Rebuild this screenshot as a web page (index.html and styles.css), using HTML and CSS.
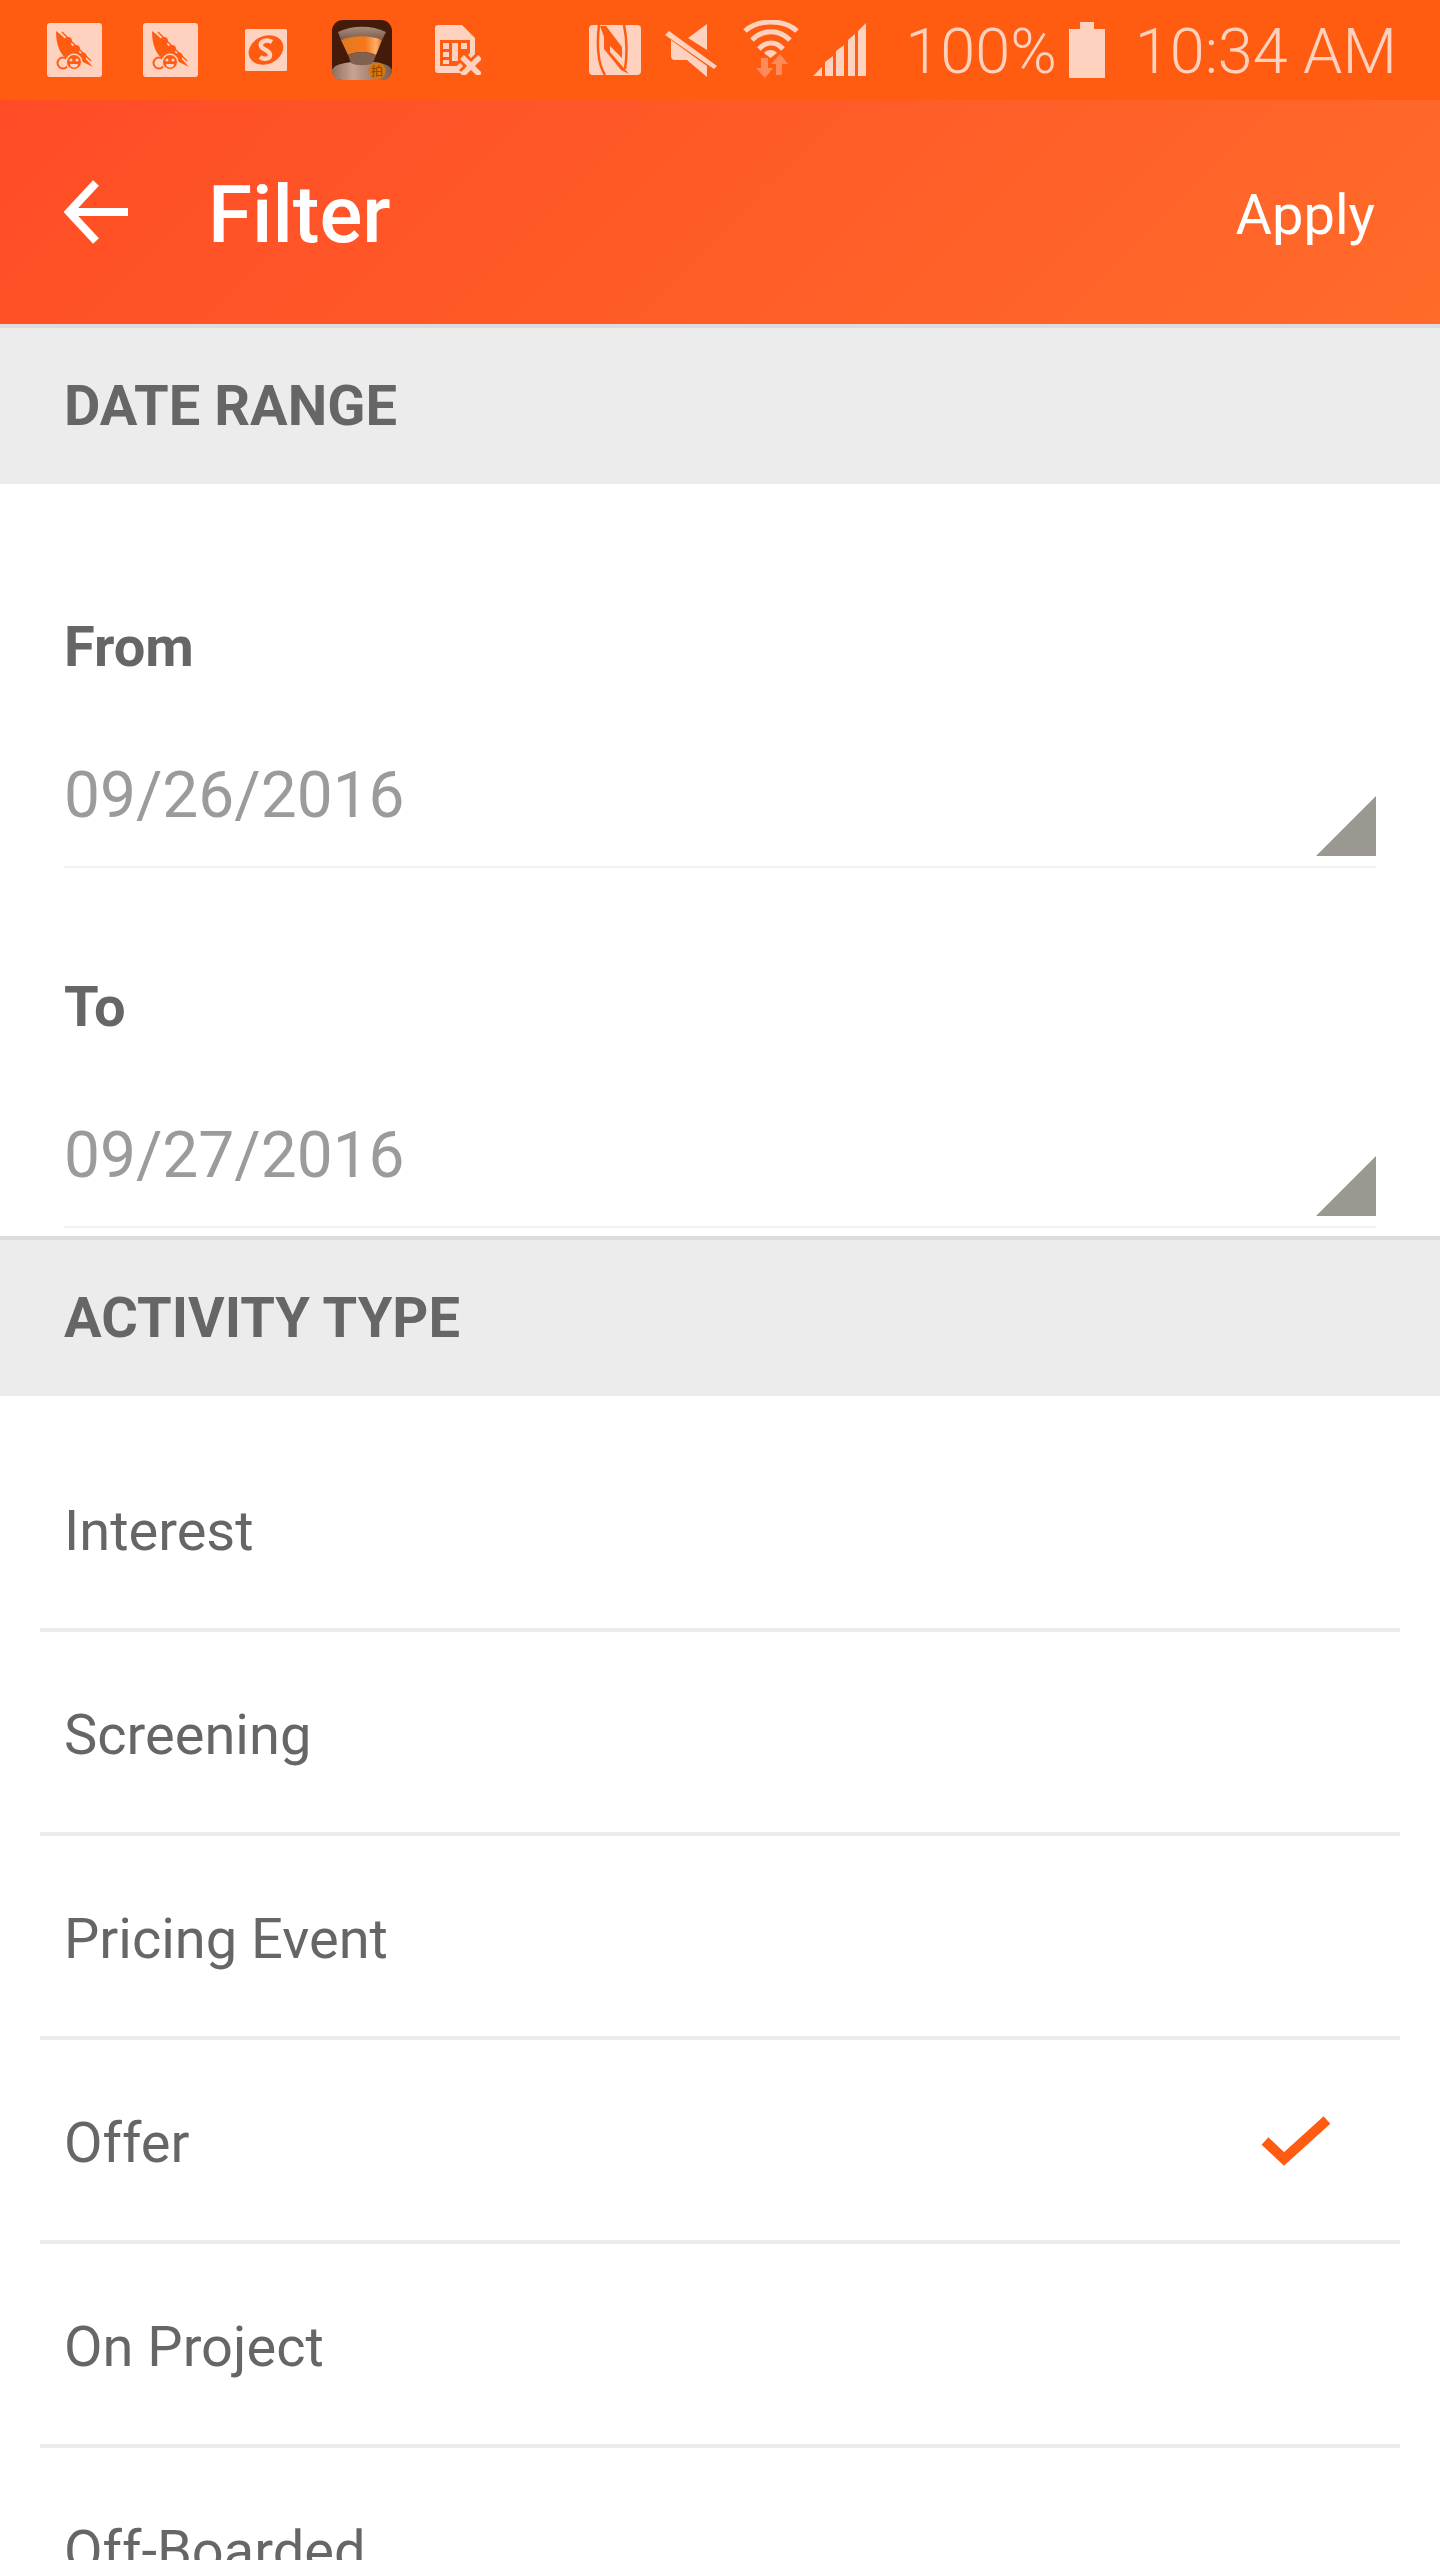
FILE: index.html
```html
<!DOCTYPE html>
<html lang="en">
<head>
    <meta charset="UTF-8">
    <meta name="viewport" content="width=device-width, initial-scale=1.0">
    <title>Filter</title>
    <link rel="stylesheet" href="styles.css">
</head>
<body>
    <div class="status-bar">
        <div class="status-left">
            <svg class="ic-pod" viewBox="0 0 55 54">
                <rect width="55" height="54" rx="3" fill="#ffd2bf"/>
                <path d="M9 8 C9 22 13 32 22 38 L34 38 L46 44 L37 34 L13 11Z" fill="#ff5c11"/>
                <circle cx="21" cy="18" r="4" fill="#ff5c11"/>
                <circle cx="29" cy="26" r="4" fill="#ff5c11"/>
                <circle cx="36" cy="33" r="3.5" fill="#ff5c11"/>
                <path d="M15 9 L44 38" stroke="#ff5c11" stroke-width="1.5"/>
                <circle cx="16" cy="40" r="6.5" fill="#ffd2bf"/>
                <circle cx="16" cy="40" r="5.5" fill="none" stroke="#ff5c11" stroke-width="2"/>
                <circle cx="27" cy="39" r="8.5" fill="#ffd2bf"/>
                <circle cx="27" cy="39" r="7" fill="#ff5c11"/>
                <circle cx="24" cy="37" r="1.6" fill="#ffd2bf"/>
                <circle cx="30" cy="37" r="1.6" fill="#ffd2bf"/>
                <path d="M23 41 h8 a4 3.5 0 0 1 -8 0Z" fill="#ffd2bf"/>
            </svg>
            <svg class="ic-pod" viewBox="0 0 55 54">
                <rect width="55" height="54" rx="3" fill="#ffd2bf"/>
                <path d="M9 8 C9 22 13 32 22 38 L34 38 L46 44 L37 34 L13 11Z" fill="#ff5c11"/>
                <circle cx="21" cy="18" r="4" fill="#ff5c11"/>
                <circle cx="29" cy="26" r="4" fill="#ff5c11"/>
                <circle cx="36" cy="33" r="3.5" fill="#ff5c11"/>
                <path d="M15 9 L44 38" stroke="#ff5c11" stroke-width="1.5"/>
                <circle cx="16" cy="40" r="6.5" fill="#ffd2bf"/>
                <circle cx="16" cy="40" r="5.5" fill="none" stroke="#ff5c11" stroke-width="2"/>
                <circle cx="27" cy="39" r="8.5" fill="#ffd2bf"/>
                <circle cx="27" cy="39" r="7" fill="#ff5c11"/>
                <circle cx="24" cy="37" r="1.6" fill="#ffd2bf"/>
                <circle cx="30" cy="37" r="1.6" fill="#ffd2bf"/>
                <path d="M23 41 h8 a4 3.5 0 0 1 -8 0Z" fill="#ffd2bf"/>
            </svg>
            <svg class="ic-s" viewBox="0 0 42 42">
                <rect width="42" height="42" rx="1.5" fill="#ffd2bf"/>
                <ellipse cx="21" cy="21" rx="18" ry="14" transform="rotate(-25 21 21)" fill="#ff5c11"/>
                <path d="M27 13 C22 10 15 12 16 17 C17 21 25 21 25 26 C25 30 19 31 15 28" fill="none" stroke="#ffd2bf" stroke-width="4.5"/>
            </svg>
            <svg class="ic-robot" viewBox="0 0 60 60">
                <defs>
                    <linearGradient id="capGrad" x1="0" y1="0" x2="0" y2="1">
                        <stop offset="0" stop-color="#a98c7c"/>
                        <stop offset="1" stop-color="#7a5c4c"/>
                    </linearGradient>
                    <linearGradient id="bandGrad" x1="0" y1="0" x2="1" y2="0">
                        <stop offset="0" stop-color="#e07a20"/>
                        <stop offset="0.6" stop-color="#f5781a"/>
                        <stop offset="0.85" stop-color="#ffb06a"/>
                        <stop offset="1" stop-color="#e0771e"/>
                    </linearGradient>
                    <linearGradient id="bodyGrad" x1="0" y1="0" x2="1" y2="0">
                        <stop offset="0" stop-color="#8f7062"/>
                        <stop offset="0.35" stop-color="#c9a292"/>
                        <stop offset="1" stop-color="#7c5f50"/>
                    </linearGradient>
                </defs>
                <rect width="60" height="60" rx="11" fill="#431b08"/>
                <path d="M0 50 C2 45 10 43 20 42 H42 C50 43 58 45 60 50 C60 56 56 60 50 60 H10 C4 60 0 56 0 50Z" fill="url(#bodyGrad)"/>
                <path d="M6 12 C20 5 40 5 54 12 L50 20 C38 16 22 16 9 20Z" fill="url(#capGrad)"/>
                <path d="M9 20 C22 15 38 15 50 20 L44 35 C36 31 24 31 16 35Z" fill="url(#bandGrad)"/>
                <path d="M16 35 C24 31 36 31 44 35 L41 43 C36 46 24 46 19 43Z" fill="#80604f"/>
                <circle cx="45" cy="51" r="8.5" fill="#d9760f"/>
                <text class="robot-mark" x="45" y="55.5" text-anchor="middle">拍</text>
            </svg>
            <svg class="ic-sim" viewBox="0 0 46 50">
                <path d="M3 0 H27 L40 13 V40 Q40 48 37 48 H3 Q0 48 0 45 V3 Q0 0 3 0Z" fill="#ffd2bf"/>
                <path d="M5 15 H35 V28 L22 41 H5Z" fill="#ff5c11"/>
                <path d="M8 18 h6 v6 h-6z M8 27 h6 v5 h-6z M8 35 h6 v4 h-6z M17 18 h6 v18 h-6z M26 18 h6 v6 h-6z" fill="#ffd2bf"/>
                <path d="M28 33 L44 49 M44 33 L28 49" stroke="#ff5c11" stroke-width="11" fill="none"/>
                <path d="M27 32 L45 50 M45 32 L27 50" stroke="#ffd2bf" stroke-width="5.5" fill="none"/>
            </svg>
        </div>
        <div class="status-right">
            <svg class="ic-nfc" viewBox="0 0 52 50">
                <rect width="52" height="50" rx="4" fill="#ffd2bf"/>
                <path d="M10 0 C8 16 8 38 16 50" fill="none" stroke="#ff5c11" stroke-width="2.5"/>
                <path d="M35 0 C38 14 38 31 36 44" fill="none" stroke="#ff5c11" stroke-width="2.5"/>
                <path d="M11 1 H17 L33 22 V33 L21 21 V27 L40 49 L32 45 L15 24 V12 Z" fill="#ff5c11"/>
            </svg>
            <svg class="ic-mute" viewBox="0 0 52 54">
                <path d="M23 15 L42 1 V27Z" fill="#ffd2bf"/>
                <path d="M0 12 L4 8 L52 43 L49 46Z" fill="#ffd2bf"/>
                <path d="M6 17 V33 Q6 37 10 37 H22 L42 54 V43Z" fill="#ffd2bf"/>
            </svg>
            <svg class="ic-wifi" viewBox="0 0 56 60">
                <g fill="none" stroke="#ffd2bf" stroke-width="5">
                    <path d="M2 11 C15 -1 41 -1 54 11"/>
                    <path d="M9 20 C20 9 36 9 47 20"/>
                    <path d="M16 29 C23 21 33 21 40 29"/>
                </g>
                <path d="M21 33 C24 29 31 29 34 33 L27.5 38Z" fill="#ffd2bf"/>
                <path d="M18 38 h7 v10 h5 l-8 10 l-9 -10 h5z M33 55 V44 h-5 l9 -10 l8 10 h-6 v11z" fill="#ff8a5a"/>
            </svg>
            <svg class="ic-signal" viewBox="0 0 54 54">
                <path d="M0 53 L9 44 V53Z M12 39 L20 33 V53 H12Z M23 28 L31 22 V53 H23Z M35 17 L42 11 V53 H35Z M45 8 L53 0 V53 H45Z" fill="#ffd2bf"/>
            </svg>
            <span class="status-pct">100%</span>
            <div class="battery">
                <div class="battery-nub"></div>
                <div class="battery-body"></div>
            </div>
            <span class="status-time">10:34 AM</span>
        </div>
    </div>

    <header class="appbar">
        <svg class="back-arrow" viewBox="0 0 64 64">
            <path d="M32 3 L5 32 L32 61 M5 32 H64" fill="none" stroke="#fff" stroke-width="8"/>
        </svg>
        <h1 class="appbar-title">Filter</h1>
        <span class="appbar-action">Apply</span>
    </header>

    <div class="section-head date-head">DATE RANGE</div>
    <section class="date-section">
        <div class="field">
            <div class="field-label">From</div>
            <div class="date-row">
                <span class="date-value">09/26/2016</span>
                <svg class="corner" viewBox="0 0 60 60"><path d="M60 0 V60 H0Z" fill="#9b9892"/></svg>
            </div>
        </div>
        <div class="field">
            <div class="field-label">To</div>
            <div class="date-row">
                <span class="date-value">09/27/2016</span>
                <svg class="corner" viewBox="0 0 60 60"><path d="M60 0 V60 H0Z" fill="#9b9892"/></svg>
            </div>
        </div>
    </section>

    <div class="section-head">ACTIVITY TYPE</div>
    <ul class="type-list">
        <li class="type-row">Interest</li>
        <li class="type-row">Screening</li>
        <li class="type-row">Pricing Event</li>
        <li class="type-row">Offer
            <svg class="check" viewBox="0 0 70 52">
                <path d="M4 26 L23 44 L66 5" fill="none" stroke="#ff5c11" stroke-width="10"/>
            </svg>
        </li>
        <li class="type-row">On Project</li>
        <li class="type-row">Off-Boarded</li>
    </ul>
</body>
</html>
```

FILE: styles.css
```css
* {
    box-sizing: border-box;
}
html, body {
    margin: 0;
    padding: 0;
}
body {
    width: 1440px;
    height: 2560px;
    overflow: hidden;
    background: #fff;
    font-family: "Roboto", sans-serif;
    color: #666;
}

/* status bar */
.status-bar {
    height: 100px;
    background: #ff5c11;
    display: flex;
    justify-content: space-between;
    align-items: center;
    color: #ffd2bf;
}
.status-left, .status-right {
    display: flex;
    align-items: center;
}
.status-left {
    padding-left: 47px;
}
.status-right {
    padding-right: 43px;
}
.status-left svg, .status-right svg {
    display: block;
    flex: none;
}
.ic-pod {
    width: 55px;
    height: 54px;
    margin-right: 41px;
}
.ic-pod + .ic-pod {
    margin-right: 47px;
}
.ic-s {
    width: 42px;
    height: 42px;
    margin-right: 45px;
}
.ic-robot {
    width: 60px;
    height: 60px;
    margin-right: 43px;
}
.robot-mark {
    font-family: "Noto Sans CJK SC", sans-serif;
    font-size: 12px;
    fill: #8a4000;
}
.ic-sim {
    width: 46px;
    height: 50px;
}
.ic-nfc {
    width: 52px;
    height: 50px;
    margin-right: 24px;
}
.ic-mute {
    width: 52px;
    height: 54px;
    margin-right: 26px;
}
.ic-wifi {
    width: 56px;
    height: 60px;
    margin-right: 14px;
}
.ic-signal {
    width: 54px;
    height: 54px;
    margin-right: 38px;
}
.status-pct, .status-time {
    font-size: 63px;
    font-weight: 300;
    line-height: 100px;
    padding-top: 4px;
    white-space: nowrap;
}
.battery {
    width: 36px;
    margin: 0 30px 0 12px;
    display: flex;
    flex-direction: column;
    align-items: center;
}
.battery-nub {
    width: 14px;
    height: 7px;
    background: #ffd2bf;
}
.battery-body {
    width: 36px;
    height: 49px;
    background: #ffd2bf;
}

/* app bar */
.appbar {
    height: 224px;
    background: linear-gradient(135deg, #ff4c26 0%, #ff6b2a 100%);
    display: flex;
    align-items: center;
    padding: 0 65px 0 64px;
    color: #fff;
}
.back-arrow {
    width: 64px;
    height: 64px;
    flex: none;
}
.appbar-title {
    margin: 0 0 0 80px;
    padding-top: 6px;
    font-size: 80px;
    font-weight: 500;
    flex: 1;
}
.appbar-action {
    padding-top: 6px;
    font-size: 56px;
    font-weight: 400;
}

/* sections */
.section-head {
    height: 160px;
    padding: 0 64px;
    background: #ececec;
    border-top: 4px solid #dcdcdc;
    font-size: 56px;
    font-weight: 700;
    line-height: 156px;
}
.date-section {
    padding: 24px 64px 8px;
}
.field {
    height: 360px;
    padding-top: 103px;
}
.field-label {
    font-size: 56px;
    font-weight: 700;
    line-height: 72px;
}
.date-row {
    margin-top: 73px;
    display: flex;
    justify-content: space-between;
    align-items: flex-end;
    padding-bottom: 10px;
    border-bottom: 2px solid #f1f1ef;
}
.date-value {
    font-size: 64px;
    line-height: 80px;
    margin-bottom: 20px;
    color: #9b9b9b;
}
.corner {
    width: 60px;
    height: 60px;
    flex: none;
}

/* activity list */
.type-list {
    margin: 0;
    padding: 0 40px;
    list-style: none;
}
.type-row {
    height: 204px;
    padding: 6px 24px 0;
    display: flex;
    justify-content: space-between;
    align-items: center;
    border-bottom: 4px solid #ececec;
    font-size: 56px;
}
.type-row:first-child {
    height: 236px;
    padding-top: 38px;
}
.check {
    width: 70px;
    height: 52px;
    margin-right: 45px;
    margin-bottom: 4px;
}
```
